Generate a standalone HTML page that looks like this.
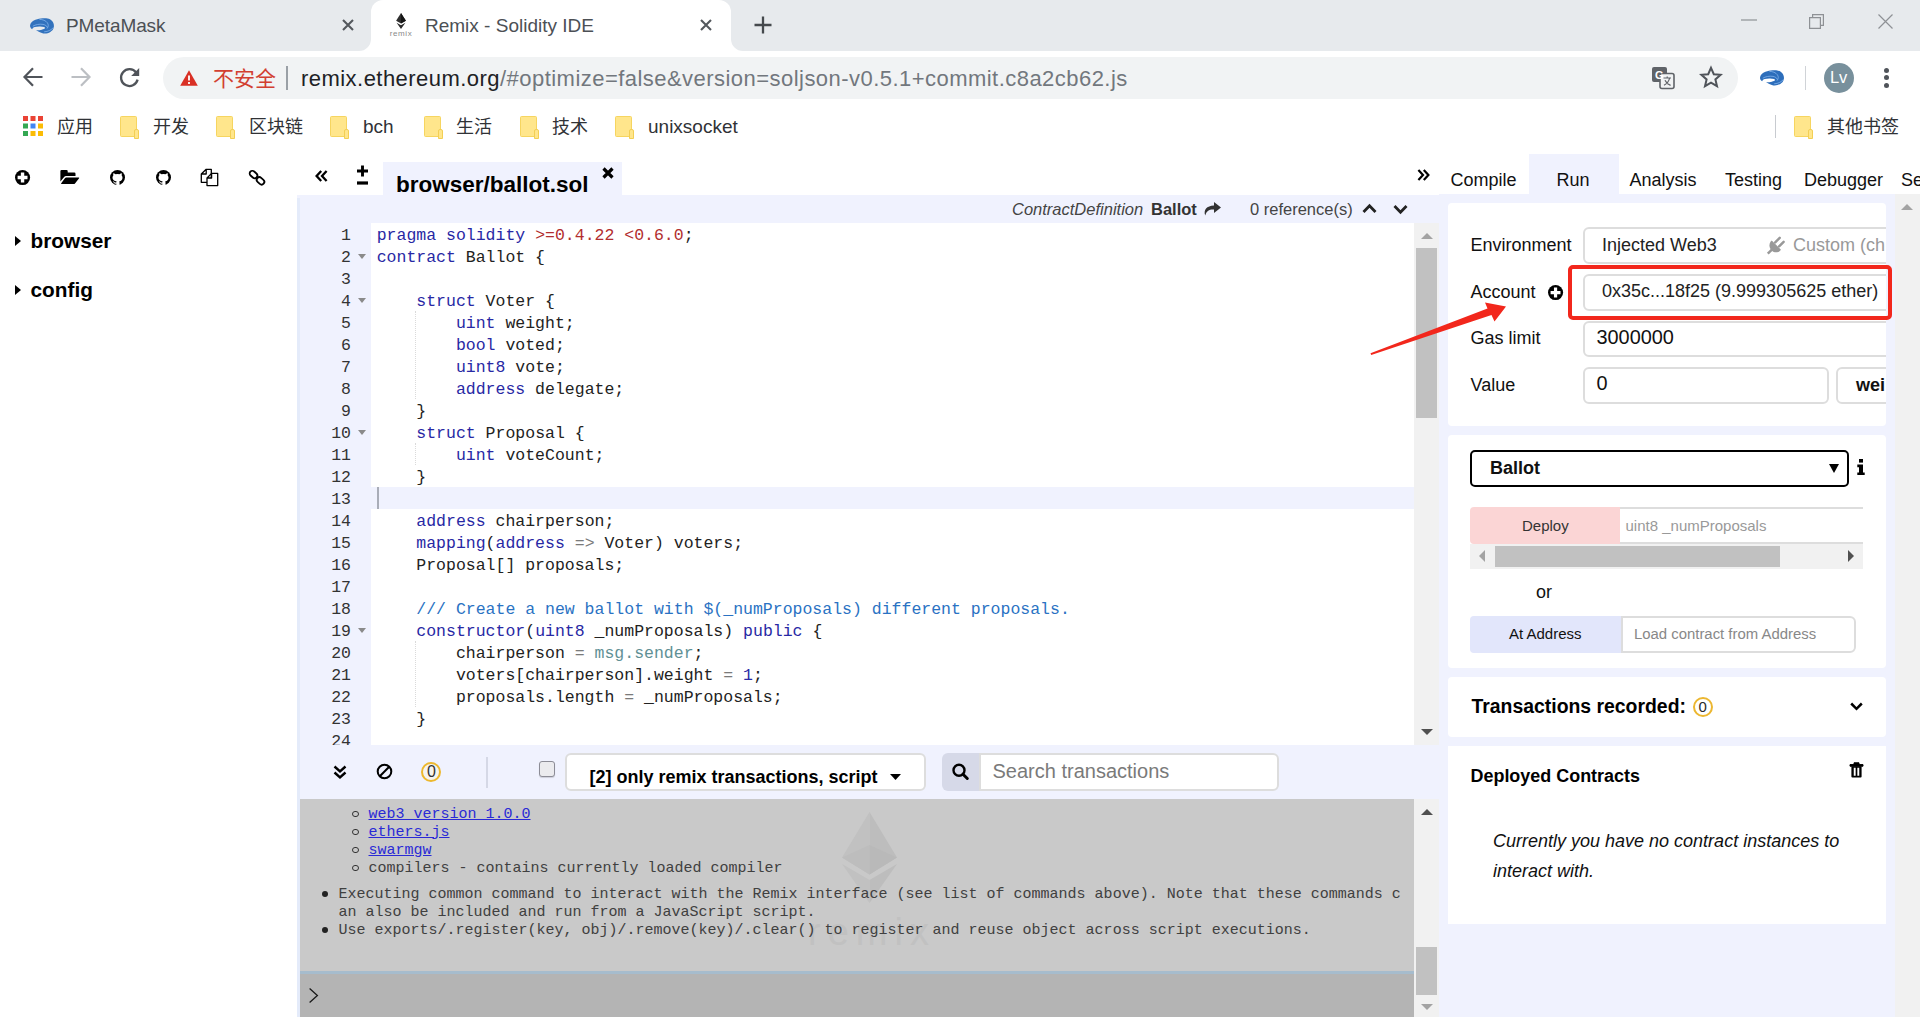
<!DOCTYPE html>
<html lang="zh">
<head>
<meta charset="utf-8">
<title>Remix - Solidity IDE</title>
<style>
*{box-sizing:border-box}
html,body{margin:0;padding:0}
body{width:1920px;height:1017px;overflow:hidden;position:relative;background:#fff;font-family:"Liberation Sans","Noto Sans CJK SC",sans-serif;color:#000}
.abs{position:absolute}
.t{position:absolute;white-space:nowrap;line-height:1}
svg{position:absolute;overflow:visible}
/* ---------- chrome ---------- */
#tabstrip{left:0;top:0;width:1920px;height:51px;background:#e7eaed}
#acttab{left:371px;top:0;width:360px;height:51px;background:#fff;border-radius:12px 12px 0 0}
.ui{font-family:"Liberation Sans","Noto Sans CJK SC",sans-serif;color:#4c5055}
#urlpill{left:163px;top:57px;width:1575px;height:41.500px;border-radius:21px;background:#f1f3f4}
.bk{font-size:18px;color:#303236;top:118px}
.fold{width:17px;height:21.500px;top:115.500px;background:#ffe68c;border:1px solid #f6d560;border-radius:1.500px}
.fold:after{content:"";position:absolute;left:12.500px;top:12.500px;width:3.500px;height:8px;background:#ffe68c;border:1px solid #f3cf55;border-radius:2px 2px 0 0}
/* ---------- page ---------- */
#page{left:0;top:0;width:1920px;height:1017px}
#editor{left:300px;top:223px;width:1114px;height:522px;overflow:hidden;background:#fff}
#gutter{left:0;top:0;width:71px;height:523px;background:#f0f2fe}
.ln{position:absolute;margin-top:2px;left:0;width:51px;text-align:right;height:22px;line-height:22px;font-family:"Liberation Mono",monospace;font-size:16.500px;color:#333}
.fa{left:58px;width:0;height:0;border-left:4px solid transparent;border-right:4px solid transparent;border-top:5px solid #8a8a8a}
#code{left:71px;top:0;width:1043px;height:523px}
.cl{position:absolute;margin-top:2px;left:5.700px;height:22px;line-height:22px;white-space:pre;font-family:"Liberation Mono",monospace;font-size:16.500px;color:#222}
.k{color:#2828a4}.s{color:#b22e2e}.c{color:#2a72c3}.o{color:#7a7a7a}.m{color:#5f9095}.n{color:#2a2aa5}
#curline{left:0;top:264px;width:1043px;height:22px;background:#f0f2fe}
#cursor{left:6px;top:264px;width:2px;height:22px;background:#a9adb8}
.rt{top:171px;font-size:18px;color:#111}
.card{left:1448px;width:438px;background:#fff;overflow:hidden}
.lb{font-size:18px;color:#111}
.inp{border:2px solid #dddddd;border-radius:6px;background:#fff}
#term{left:300px;top:799px;width:1114px;height:172px;background:#c9c9c9;overflow:hidden}
.tl{font-family:"Liberation Mono",monospace;font-size:15px;color:#404040;line-height:18px;margin-top:1.500px}
.lk{color:#2a2ad6;text-decoration:underline}
.bu0{left:52px;margin-top:1.500px;width:6.500px;height:6.500px;border-radius:4px;border:1.500px solid #333}
.bu1{left:22px;margin-top:1px;width:5.500px;height:5.500px;border-radius:3px;background:#222}
.ig{width:0;border-left:1px dotted #dadada}
</style>
</head>
<body>
<!-- CHROME -->
<div class="abs" id="tabstrip"></div>
<div class="abs" id="acttab"></div>
<!-- tab curves -->
<svg style="left:359px;top:39px" width="12" height="12"><path d="M12 0 V12 H0 A12 12 0 0 0 12 0Z" fill="#fff"/></svg>
<svg style="left:731px;top:39px" width="12" height="12"><path d="M0 0 V12 H12 A12 12 0 0 1 0 0Z" fill="#fff"/></svg>
<!-- tab 1 -->
<svg style="left:30px;top:17.500px" width="24" height="15.500" viewBox="0 0 24 15.500"><path d="M2.100 11.200 C0.300 10 -0.300 8.400 0.200 6.800 C0.800 4.800 2.200 3.400 3.800 2.600 C6 1.400 8.400 0.800 10.700 0.500 C12.600 0.200 14.400 0.100 16.200 0.200 C18 0.400 19.800 1 21 1.900 C22.600 3 23.500 4.600 23.800 6.400 C24 7.600 24 8.800 23.700 9.800 C23.200 11.600 22 13 20.300 13.900 C18.600 14.900 16.800 15.500 14.800 15.500 C12.800 15.400 10.900 14.700 9.300 13.900 C8 13.300 6.900 12.700 5.900 12 C7.500 12.300 9.100 12.300 10.700 11.900 C12.300 11.600 13.800 11.200 14.800 10.500 C15.200 10 14.900 9.400 14.100 9.100 C12.600 8.500 10.900 8.300 9.300 8.400 C7.700 8.500 6.100 8.700 4.800 9.100 C3.600 9.500 2.600 10.200 2.100 11.200Z" fill="#3272bd"/><path d="M2.800 8.200 C5.400 6.600 9.600 5.800 13 6.400 C15.400 6.900 16.900 8 17.300 9.400 M9.400 1.400 C12.600 1.300 15.800 2.600 17.400 4.800 C18.600 6.500 18.600 8.600 17 10.600 M23.400 9.400 C21.600 12 18 13.600 14.200 13.800" stroke="#8cbcf2" stroke-width="0.700" fill="none"/></svg>
<div class="t ui" style="left:66px;top:16px;font-size:19px;letter-spacing:-0.1px">PMetaMask</div>
<svg style="left:342px;top:19px" width="12" height="12" viewBox="0 0 12 12"><path d="M1 1 L11 11 M11 1 L1 11" stroke="#54585d" stroke-width="2.100" fill="none"/></svg>
<!-- tab 2 -->
<svg style="left:390px;top:12px" width="22" height="26" viewBox="0 0 22 26"><path d="M11 1 L6.100 8.800 L11 11.400 L15.900 8.800Z" fill="#2e2e2e"/><path d="M11 1 L11 11.400 L15.900 8.800Z" fill="#151515"/><path d="M6.600 10.800 L11 16.900 L15.400 10.800 L11 13.200Z" fill="#2a2a2a"/></svg>
<div class="t" style="left:389.800px;top:29.500px;font-size:8px;color:#8a8a8a;letter-spacing:0.600px">remix</div>
<div class="t ui" style="left:425px;top:16px;font-size:19px;letter-spacing:0px">Remix - Solidity IDE</div>
<svg style="left:700px;top:19px" width="12" height="12" viewBox="0 0 12 12"><path d="M1 1 L11 11 M11 1 L1 11" stroke="#54585d" stroke-width="2.100" fill="none"/></svg>
<svg style="left:754px;top:16px" width="18" height="18" viewBox="0 0 18 18"><path d="M9 0.5 V17.5 M0.5 9 H17.5" stroke="#45494d" stroke-width="2.3" fill="none"/></svg>
<!-- window controls -->
<svg style="left:1741px;top:19px" width="16" height="2"><path d="M0 1 H16" stroke="#8e9195" stroke-width="1.2"/></svg>
<svg style="left:1809px;top:14px" width="15" height="15" viewBox="0 0 15 15"><path d="M0.6 3.6 H11.4 V14.4 H0.6Z M3.6 3.6 V0.6 H14.4 V11.4 H11.4" stroke="#8e9195" stroke-width="1.2" fill="none"/></svg>
<svg style="left:1878px;top:14px" width="15" height="15" viewBox="0 0 15 15"><path d="M0.5 0.5 L14.5 14.5 M14.5 0.5 L0.5 14.5" stroke="#8e9195" stroke-width="1.2" fill="none"/></svg>
<!-- toolbar -->
<svg style="left:23px;top:67px" width="20" height="20" viewBox="0 0 20 20"><path d="M19.5 10 H2 M10 1.2 L1.5 10 L10 18.8" stroke="#50545a" stroke-width="2.2" fill="none"/></svg>
<svg style="left:71px;top:67px" width="20" height="20" viewBox="0 0 20 20"><path d="M0.5 10 H18 M10 1.2 L18.5 10 L10 18.8" stroke="#bcbfc3" stroke-width="2.2" fill="none"/></svg>
<svg style="left:119px;top:67px" width="21" height="21" viewBox="0 0 21 21"><path d="M17.2 5.6 A8.4 8.4 0 1 0 18.6 12.6" stroke="#50545a" stroke-width="2.3" fill="none"/><path d="M20.2 1 V9 H12.2Z" fill="#50545a"/></svg>
<div class="abs" id="urlpill"></div>
<svg style="left:180px;top:70px" width="18" height="16" viewBox="0 0 18 16"><path d="M9 0.3 L17.8 15.7 H0.2Z" fill="#d93025"/><path d="M9 5.4 V10.6 M9 12 V14" stroke="#fff" stroke-width="1.8"/></svg>
<div class="t" style="left:213px;top:67px;font-size:21px;color:#d23f31;font-family:'Noto Sans CJK SC',sans-serif">不安全</div>
<div class="abs" style="left:286px;top:66px;width:2px;height:24px;background:#9aa0a6"></div>
<div class="t" style="left:301px;top:68px;font-size:22px;color:#202124;letter-spacing:0.46px">remix.ethereum.org<span style="color:#72777d">/#optimize=false&amp;version=soljson-v0.5.1+commit.c8a2cb62.js</span></div>
<!-- translate icon -->
<svg style="left:1652px;top:67px" width="22" height="22" viewBox="0 0 22 22"><rect x="0" y="0" width="15" height="15" rx="2" fill="#5f6368"/><rect x="8" y="6.5" width="14" height="15" rx="2" fill="#f1f3f4" stroke="#5f6368" stroke-width="1.6"/><text x="3" y="12" font-size="11" font-weight="bold" fill="#fff" font-family="Liberation Sans, sans-serif">G</text><path d="M11.5 11 H19 M15.2 9.5 V11 M17.6 11 C17 14 14.5 17 12 18.3 M13 13.2 C14 15.5 16.4 17.6 18.6 18.4" stroke="#5f6368" stroke-width="1.2" fill="none"/></svg>
<svg style="left:1700px;top:66px" width="22" height="22" viewBox="0 0 22 22"><path d="M11 1.8 L13.8 8.2 L20.6 8.8 L15.4 13.4 L17 20.2 L11 16.6 L5 20.2 L6.6 13.4 L1.4 8.8 L8.2 8.2Z" stroke="#50545a" stroke-width="2" fill="none" stroke-linejoin="miter"/></svg>
<svg style="left:1760px;top:70.200px" width="24" height="15.500" viewBox="0 0 24 15.500"><path d="M2.100 11.200 C0.300 10 -0.300 8.400 0.200 6.800 C0.800 4.800 2.200 3.400 3.800 2.600 C6 1.400 8.400 0.800 10.700 0.500 C12.600 0.200 14.400 0.100 16.200 0.200 C18 0.400 19.800 1 21 1.900 C22.600 3 23.500 4.600 23.800 6.400 C24 7.600 24 8.800 23.700 9.800 C23.200 11.600 22 13 20.300 13.900 C18.600 14.900 16.800 15.500 14.800 15.500 C12.800 15.400 10.900 14.700 9.300 13.900 C8 13.300 6.900 12.700 5.900 12 C7.500 12.300 9.100 12.300 10.700 11.900 C12.300 11.600 13.800 11.200 14.800 10.500 C15.200 10 14.900 9.400 14.100 9.100 C12.600 8.500 10.900 8.300 9.300 8.400 C7.700 8.500 6.100 8.700 4.800 9.100 C3.600 9.500 2.600 10.200 2.100 11.200Z" fill="#2d6ebb"/><path d="M2.800 8.200 C5.400 6.600 9.600 5.800 13 6.400 C15.400 6.900 16.900 8 17.300 9.400 M9.400 1.400 C12.600 1.300 15.800 2.600 17.400 4.800 C18.600 6.500 18.600 8.600 17 10.600 M23.400 9.400 C21.600 12 18 13.600 14.200 13.800" stroke="#8cbcf2" stroke-width="0.700" fill="none"/></svg>
<div class="abs" style="left:1805px;top:66px;width:1px;height:24px;background:#d0d3d7"></div>
<div class="abs" style="left:1824px;top:63px;width:30px;height:30px;border-radius:15px;background:#78909c"></div>
<div class="t" style="left:1830px;top:69px;font-size:16.500px;color:#fff;letter-spacing:-0.200px">Lv</div>
<div class="abs" style="left:1884.400px;top:67.800px;width:5px;height:5px;border-radius:3px;background:#50545a"></div>
<div class="abs" style="left:1884.400px;top:75.300px;width:5px;height:5px;border-radius:3px;background:#50545a"></div>
<div class="abs" style="left:1884.400px;top:82.700px;width:5px;height:5px;border-radius:3px;background:#50545a"></div>
<!-- bookmarks -->
<svg style="left:23px;top:116px" width="20" height="20" viewBox="0 0 20 20"><g><rect x="0" y="0" width="5" height="5" fill="#ea4335"/><rect x="7.500" y="0" width="5" height="5" fill="#ea4335"/><rect x="15" y="0" width="5" height="5" fill="#ea4335"/><rect x="0" y="7.500" width="5" height="5" fill="#34a853"/><rect x="7.500" y="7.500" width="5" height="5" fill="#4285f4"/><rect x="15" y="7.500" width="5" height="5" fill="#fbbc05"/><rect x="0" y="15" width="5" height="5" fill="#34a853"/><rect x="7.500" y="15" width="5" height="5" fill="#fbbc05"/><rect x="15" y="15" width="5" height="5" fill="#fbbc05"/></g></svg>
<div class="t bk" style="left:57px">应用</div>
<div class="abs fold" style="left:120px"></div><div class="t bk" style="left:153px">开发</div>
<div class="abs fold" style="left:216px"></div><div class="t bk" style="left:249px">区块链</div>
<div class="abs fold" style="left:330px"></div><div class="t bk" style="left:363px;font-size:19px;top:117px">bch</div>
<div class="abs fold" style="left:424px"></div><div class="t bk" style="left:456px">生活</div>
<div class="abs fold" style="left:520px"></div><div class="t bk" style="left:552px">技术</div>
<div class="abs fold" style="left:615px"></div><div class="t bk" style="left:648px;font-size:19px;top:117px">unixsocket</div>
<div class="abs" style="left:1775px;top:115px;width:1px;height:23px;background:#c8cbd0"></div>
<div class="abs fold" style="left:1794px"></div><div class="t bk" style="left:1827px">其他书签</div>

<!-- PAGE -->
<div class="abs" id="page">
<!-- LEFT PANEL -->
<svg style="left:15.100px;top:169.900px" width="15.100" height="15.100" viewBox="0 0 15.100 15.100"><circle cx="7.550" cy="7.550" r="7.550" fill="#000"/><path d="M7.550 2.600 V12.500 M2.600 7.550 H12.500" stroke="#fff" stroke-width="3.400"/></svg>
<svg style="left:60px;top:169px" width="20" height="16" viewBox="0 0 20 16"><path d="M0.400 12.400 V2.100 Q0.400 0.900 1.600 0.900 H6.500 Q7.700 0.900 7.700 2.100 V3.500 H14.300 Q15.500 3.500 15.500 4.700 V6.900 H6 Q5 6.900 4.300 7.700Z" fill="#000"/><path d="M6.300 8.400 H18.700 Q19.600 8.400 19.100 9.200 L15 14.400 Q14.500 15 13.700 15 H1.500 Q0.700 15 1.200 14.300 L5.100 9.100 Q5.600 8.400 6.300 8.400Z" fill="#000"/></svg>
<svg class="gh" style="left:110.100px;top:169.800px" width="15" height="15.200" viewBox="0 0 15 15.200"><circle cx="7.500" cy="7.500" r="7.500" fill="#000"/><path d="M3.500 3 L5.500 4.200 Q7.500 3.700 9.500 4.200 L11.500 3 Q12 4.400 11.700 5.400 Q12.700 6.600 12.500 8 Q12.200 10.900 9.300 11.300 Q9.500 11.800 9.500 12.500 V15.200 H6.300 V13.600 Q4.200 14 3.500 12.200 Q3.200 11.500 2.600 11.300 Q3.600 10.900 4.300 11.900 Q5 12.800 6.300 12.400 Q6.300 11.700 6.600 11.300 Q2.800 10.900 2.500 8 Q2.300 6.600 3.300 5.400 Q3 4.400 3.500 3Z" fill="#fff"/></svg>
<svg class="gh" style="left:155.900px;top:169.800px" width="15" height="15.200" viewBox="0 0 15 15.200"><circle cx="7.500" cy="7.500" r="7.500" fill="#000"/><path d="M3.500 3 L5.500 4.200 Q7.500 3.700 9.500 4.200 L11.500 3 Q12 4.400 11.700 5.400 Q12.700 6.600 12.500 8 Q12.200 10.900 9.300 11.300 Q9.500 11.800 9.500 12.500 V15.200 H6.300 V13.600 Q4.200 14 3.500 12.200 Q3.200 11.500 2.600 11.300 Q3.600 10.900 4.300 11.900 Q5 12.800 6.300 12.400 Q6.300 11.700 6.600 11.300 Q2.800 10.900 2.500 8 Q2.300 6.600 3.300 5.400 Q3 4.400 3.500 3Z" fill="#fff"/></svg>
<svg style="left:200px;top:168px" width="19" height="19" viewBox="0 0 19 19"><path d="M1.300 6 L6.200 1.300 H11.300 V14.300 H1.300Z M1.300 6 H6.200 V1.300" fill="#fff" stroke="#000" stroke-width="1.300" stroke-linejoin="round"/><path d="M7 10 L11.600 5.400 H17.700 V17.600 H7Z M7 10 H11.600 V5.400" fill="#fff" stroke="#000" stroke-width="1.300" stroke-linejoin="round"/></svg>
<svg style="left:248.500px;top:168.500px" width="17" height="17" viewBox="0 0 17 17"><g fill="none" stroke="#000" stroke-width="1.800"><rect x="0.300" y="2.800" width="8.400" height="5.400" rx="2.700" transform="rotate(42 4.500 5.500)"/><rect x="7.300" y="9.200" width="8.400" height="5.400" rx="2.700" transform="rotate(42 11.500 11.900)"/></g></svg>
<svg style="left:15px;top:235.500px" width="6" height="10" viewBox="0 0 6 10"><path d="M0 0 L6 5 L0 10Z" fill="#000"/></svg>
<div class="t" style="left:30.500px;top:231px;font-size:20.800px;font-weight:bold">browser</div>
<svg style="left:15px;top:284.500px" width="6" height="10" viewBox="0 0 6 10"><path d="M0 0 L6 5 L0 10Z" fill="#000"/></svg>
<div class="t" style="left:30.500px;top:280px;font-size:20.800px;font-weight:bold">config</div>

<!-- CENTER -->
<div class="abs" style="left:297px;top:195px;width:1143px;height:822px;background:#f0f2fe"></div>
<div class="abs" style="left:297px;top:198px;width:3px;height:819px;background:#e4ebfa"></div>
<div class="abs" style="left:383px;top:162px;width:239px;height:34px;background:#f0f2fe"></div>
<svg style="left:315px;top:170px" width="13" height="12" viewBox="0 0 13 12"><path d="M6.200 1 L1.600 6 L6.200 11 M11.600 1 L7 6 L11.600 11" stroke="#000" stroke-width="2.300" fill="none"/></svg>
<svg style="left:356px;top:165px" width="13" height="21" viewBox="0 0 13 21"><path d="M6.500 0.500 V11.500 M1 6 H12" stroke="#000" stroke-width="2.900" fill="none"/><path d="M1 18 H12" stroke="#000" stroke-width="3.200"/></svg>
<div class="t" style="left:396px;top:173.500px;font-size:22.500px;font-weight:bold">browser/ballot.sol</div>
<svg style="left:602px;top:167px" width="12" height="12" viewBox="0 0 12 12"><path d="M1.500 1.500 L10.500 10.500 M10.500 1.500 L1.500 10.500" stroke="#000" stroke-width="3.200"/></svg>
<svg style="left:1416.800px;top:168.800px" width="13" height="12" viewBox="0 0 13 12"><path d="M1.400 1 L6 6 L1.400 11 M6.800 1 L11.400 6 L6.800 11" stroke="#000" stroke-width="2.200" fill="none"/></svg>
<!-- context bar -->
<div class="t" style="left:1012px;top:201px;font-size:16.500px;font-style:italic;color:#444">ContractDefinition</div>
<div class="t" style="left:1151px;top:201px;font-size:16.500px;font-weight:bold;color:#333">Ballot</div>
<svg style="left:1204px;top:202px" width="17" height="14" viewBox="0 0 17 14"><path d="M10 0 L17 5.500 L10 11 V7.600 C5 7.400 2.400 9 1.300 13.600 C-0.800 8 2.600 3.600 10 3.400Z" fill="#333"/></svg>
<div class="t" style="left:1250px;top:201px;font-size:16.500px;color:#444">0 reference(s)</div>
<svg style="left:1362px;top:203px" width="15" height="11" viewBox="0 0 15 11"><path d="M1.500 9 L7.500 2.800 L13.500 9" stroke="#222" stroke-width="2.800" fill="none"/></svg>
<svg style="left:1393px;top:204px" width="15" height="11" viewBox="0 0 15 11"><path d="M1.500 2 L7.500 8.200 L13.500 2" stroke="#222" stroke-width="2.800" fill="none"/></svg>
<!-- editor -->
<div class="abs" id="editor">
<div class="abs" id="gutter">
<div class="ln" style="top:0px">1</div>
<div class="ln" style="top:22px">2</div>
<div class="abs fa" style="top:31px"></div>
<div class="ln" style="top:44px">3</div>
<div class="ln" style="top:66px">4</div>
<div class="abs fa" style="top:75px"></div>
<div class="ln" style="top:88px">5</div>
<div class="ln" style="top:110px">6</div>
<div class="ln" style="top:132px">7</div>
<div class="ln" style="top:154px">8</div>
<div class="ln" style="top:176px">9</div>
<div class="ln" style="top:198px">10</div>
<div class="abs fa" style="top:207px"></div>
<div class="ln" style="top:220px">11</div>
<div class="ln" style="top:242px">12</div>
<div class="ln" style="top:264px">13</div>
<div class="ln" style="top:286px">14</div>
<div class="ln" style="top:308px">15</div>
<div class="ln" style="top:330px">16</div>
<div class="ln" style="top:352px">17</div>
<div class="ln" style="top:374px">18</div>
<div class="ln" style="top:396px">19</div>
<div class="abs fa" style="top:405px"></div>
<div class="ln" style="top:418px">20</div>
<div class="ln" style="top:440px">21</div>
<div class="ln" style="top:462px">22</div>
<div class="ln" style="top:484px">23</div>
<div class="ln" style="top:506px">24</div>
</div>
<div class="abs" id="code">
<div class="abs" id="curline"></div><div class="abs" id="cursor"></div>
<div class="abs ig" style="left:43.500px;top:88px;height:88px"></div>
<div class="abs ig" style="left:43.500px;top:220px;height:22px"></div>
<div class="abs ig" style="left:43.500px;top:418px;height:66px"></div>
<div class="cl" style="top:0px"><span class="k">pragma solidity</span> <span class="s">&gt;=0.4.22 &lt;0.6.0</span>;</div>
<div class="cl" style="top:22px"><span class="k">contract</span> Ballot {</div>
<div class="cl" style="top:44px"></div>
<div class="cl" style="top:66px">    <span class="k">struct</span> Voter {</div>
<div class="cl" style="top:88px">        <span class="k">uint</span> weight;</div>
<div class="cl" style="top:110px">        <span class="k">bool</span> voted;</div>
<div class="cl" style="top:132px">        <span class="k">uint8</span> vote;</div>
<div class="cl" style="top:154px">        <span class="k">address</span> delegate;</div>
<div class="cl" style="top:176px">    }</div>
<div class="cl" style="top:198px">    <span class="k">struct</span> Proposal {</div>
<div class="cl" style="top:220px">        <span class="k">uint</span> voteCount;</div>
<div class="cl" style="top:242px">    }</div>
<div class="cl" style="top:264px"></div>
<div class="cl" style="top:286px">    <span class="k">address</span> chairperson;</div>
<div class="cl" style="top:308px">    <span class="k">mapping</span>(<span class="k">address</span> <span class="o">=&gt;</span> Voter) voters;</div>
<div class="cl" style="top:330px">    Proposal[] proposals;</div>
<div class="cl" style="top:352px"></div>
<div class="cl" style="top:374px">    <span class="c">/// Create a new ballot with $(_numProposals) different proposals.</span></div>
<div class="cl" style="top:396px">    <span class="k">constructor</span>(<span class="k">uint8</span> _numProposals) <span class="k">public</span> {</div>
<div class="cl" style="top:418px">        chairperson <span class="o">=</span> <span class="m">msg.sender</span>;</div>
<div class="cl" style="top:440px">        voters[chairperson].weight <span class="o">=</span> <span class="n">1</span>;</div>
<div class="cl" style="top:462px">        proposals.length <span class="o">=</span> _numProposals;</div>
<div class="cl" style="top:484px">    }</div>
<div class="cl" style="top:506px"></div>
</div>
</div>
<!-- editor scrollbar -->
<div class="abs" style="left:1414px;top:223px;width:25px;height:522px;background:#f1f1f1"></div>
<div class="abs" style="left:1416px;top:248px;width:21px;height:170px;background:#c1c1c1"></div>
<svg style="left:1420.500px;top:233px" width="12" height="6"><path d="M0 6 L6 0 L12 6Z" fill="#a3a3a3"/></svg>
<svg style="left:1420.500px;top:729px" width="12" height="6"><path d="M0 0 L6 6 L12 0Z" fill="#505050"/></svg>

<!-- TERMINAL BAR -->
<svg style="left:333px;top:764.500px" width="14" height="14" viewBox="0 0 14 14"><path d="M1.500 1.500 L7 6.500 L12.500 1.500 M1.500 7.500 L7 12.500 L12.500 7.500" stroke="#000" stroke-width="2.400" fill="none"/></svg>
<svg style="left:375.500px;top:762.800px" width="17" height="17" viewBox="0 0 17 17"><circle cx="8.500" cy="8.500" r="6.800" stroke="#000" stroke-width="2" fill="none"/><path d="M3.800 13.200 L13.200 3.800" stroke="#000" stroke-width="2"/></svg>
<div class="abs" style="left:421px;top:761.500px;width:20px;height:20px;border-radius:10px;border:2px solid #edb82e;background:#f6f4f0"></div>
<div class="t" style="left:427.100px;top:763.500px;font-size:16px;color:#333">0</div>
<div class="abs" style="left:486px;top:757px;width:1.500px;height:31px;background:#d5d8e6"></div>
<div class="abs" style="left:539px;top:761px;width:16px;height:16px;border:1px solid #8c8c96;border-radius:3px;background:#ebebee;box-shadow:0 1px 1px rgba(0,0,0,0.150)"></div>
<div class="abs inp" style="left:564.800px;top:753px;width:361.700px;height:37.500px"></div>
<div class="t" style="left:589.500px;top:767.700px;font-size:18px;font-weight:bold;color:#000">[2] only remix transactions, script</div>
<svg style="left:890px;top:774px" width="11" height="6"><path d="M0 0 H11 L5.500 6Z" fill="#000"/></svg>
<div class="abs" style="left:941.500px;top:753px;width:40px;height:37.500px;background:#d6d9e8;border-radius:6px 0 0 6px"></div>
<svg style="left:952px;top:763px" width="18" height="18" viewBox="0 0 18 18"><circle cx="7" cy="7.200" r="5.500" stroke="#000" stroke-width="2.400" fill="none"/><path d="M11 11.200 L15.300 15.500" stroke="#000" stroke-width="3" stroke-linecap="round"/></svg>
<div class="abs inp" style="left:979px;top:753px;width:300px;height:37.500px;border-radius:0 6px 6px 0"></div>
<div class="t" style="left:992.500px;top:761.300px;font-size:20px;color:#7a7a7a">Search transactions</div>
<!-- TERMINAL LOG -->
<div class="abs" id="term">
 <svg style="left:542px;top:13px" width="55" height="91" viewBox="0 0 55 91"><path d="M27.500 0 L0 45.500 L27.500 62.500Z" fill="#c1c1c1"/><path d="M27.500 0 V62.500 L55 45.500Z" fill="#bdbdbd"/><path d="M27.500 33 L0 45.500 L27.500 62.500Z" fill="#bdbdbd"/><path d="M27.500 33 V62.500 L55 45.500Z" fill="#b9b9b9"/><path d="M0 52 L27.500 91 V68Z" fill="#c1c1c1"/><path d="M55 52 L27.500 91 V68Z" fill="#bdbdbd"/></svg>
 <div class="t" style="left:508px;top:114px;font-size:38px;color:#c1c1c1;letter-spacing:7px;font-weight:normal">remix</div>
 <div class="abs bu0" style="top:10px"></div><div class="t tl" style="left:68.500px;top:5px"><span class="lk">web3 version 1.0.0</span></div>
 <div class="abs bu0" style="top:28px"></div><div class="t tl" style="left:68.500px;top:23px"><span class="lk">ethers.js</span></div>
 <div class="abs bu0" style="top:46px"></div><div class="t tl" style="left:68.500px;top:41px"><span class="lk">swarmgw</span></div>
 <div class="abs bu0" style="top:64px"></div><div class="t tl" style="left:68.500px;top:59px">compilers - contains currently loaded compiler</div>
 <div class="abs bu1" style="top:91px"></div><div class="t tl" style="left:38.500px;top:85px">Executing common command to interact with the Remix interface (see list of commands above). Note that these commands c</div>
 <div class="t tl" style="left:38.500px;top:103px">an also be included and run from a JavaScript script.</div>
 <div class="abs bu1" style="top:127px"></div><div class="t tl" style="left:38.500px;top:121px">Use exports/.register(key, obj)/.remove(key)/.clear() to register and reuse object across script executions.</div>
</div>
<div class="abs" style="left:300px;top:970.500px;width:1114px;height:3.500px;background:#a6bccd"></div>
<div class="abs" style="left:300px;top:974px;width:1114px;height:43px;background:#b4b4b4"></div>
<svg style="left:308.500px;top:988px" width="9" height="15" viewBox="0 0 9 15"><path d="M0.600 0.500 L8.400 7.500 L0.600 14.500" stroke="#1a1a1a" stroke-width="1.300" fill="none"/></svg>
<!-- terminal scrollbar -->
<div class="abs" style="left:1414px;top:799px;width:25px;height:218px;background:#f1f1f1"></div>
<div class="abs" style="left:1416px;top:947px;width:21px;height:48px;background:#c1c1c1"></div>
<svg style="left:1420.500px;top:809px" width="12" height="6"><path d="M0 6 L6 0 L12 6Z" fill="#505050"/></svg>
<svg style="left:1420.500px;top:1004px" width="12" height="6"><path d="M0 0 L6 6 L12 0Z" fill="#a3a3a3"/></svg>

<!-- RIGHT PANEL -->
<div class="abs" style="left:1439px;top:194px;width:481px;height:823px;background:#f0f2fe"></div>
<div class="abs" style="left:1529px;top:154px;width:90px;height:42px;background:#f0f2fe"></div>
<div class="t rt" style="left:1450.500px">Compile</div>
<div class="t rt" style="left:1556.500px">Run</div>
<div class="t rt" style="left:1629.500px">Analysis</div>
<div class="t rt" style="left:1725px">Testing</div>
<div class="t rt" style="left:1804px">Debugger</div>
<div class="t rt" style="left:1901px">Se</div>
<!-- scrollbar -->
<div class="abs" style="left:1895px;top:194px;width:25px;height:823px;background:#f1f1f1"></div>
<svg style="left:1901px;top:204px" width="12" height="6"><path d="M0 6 L6 0 L12 6Z" fill="#a3a3a3"/></svg>
<!-- card 1 -->
<div class="abs card" style="top:203px;height:223px;border-radius:4px">
 <div class="t lb" style="left:22.500px;top:33px">Environment</div>
 <div class="abs inp" style="left:135px;top:24px;width:320px;height:37px"></div>
 <div class="t lb" style="left:154px;top:33px;color:#222">Injected Web3</div>
 <svg style="left:319px;top:31.500px" width="19.500" height="19.500" viewBox="0 0 19 19"><path d="M0.800 18.200 L5.500 13.500" stroke="#999" stroke-width="2.400"/><path d="M4.600 5.400 L13.600 14.400 C11.600 17.400 7.200 17.800 4.400 15 C1.600 12.200 1.800 7.600 4.600 5.400Z" fill="#999"/><path d="M8 7.200 L12.400 2.800 M11.800 11 L16.200 6.600" stroke="#999" stroke-width="2.400" stroke-linecap="round"/></svg>
 <div class="t lb" style="left:345px;top:33px;color:#999">Custom (ch</div>
 <div class="t lb" style="left:22.500px;top:80px">Account</div>
 <svg style="left:100px;top:81.500px" width="15.100" height="15.100" viewBox="0 0 15.100 15.100"><circle cx="7.550" cy="7.550" r="7.550" fill="#000"/><path d="M7.550 2.600 V12.500 M2.600 7.550 H12.500" stroke="#fff" stroke-width="3.200"/></svg>
 <div class="abs inp" style="left:135px;top:71px;width:320px;height:37px"></div>
 <div class="t lb" style="left:154px;top:79px;color:#222">0x35c...18f25 (9.999305625 ether)</div>
 <div class="t lb" style="left:22.500px;top:126px">Gas limit</div>
 <div class="abs inp" style="left:135px;top:118px;width:320px;height:36px"></div>
 <div class="t" style="left:148.500px;top:125px;font-size:19.900px;color:#111">3000000</div>
 <div class="t lb" style="left:22.500px;top:173px">Value</div>
 <div class="abs inp" style="left:135px;top:163.500px;width:246px;height:37px"></div>
 <div class="t" style="left:148.500px;top:171px;font-size:19.900px;color:#111">0</div>
 <div class="abs inp" style="left:388px;top:163.500px;width:80px;height:37px"></div>
 <div class="t lb" style="left:408px;top:173px;font-weight:bold;color:#111">wei</div>
</div>
<!-- card 2 -->
<div class="abs card" style="top:435px;height:233px;border-radius:4px">
 <div class="abs" style="left:22px;top:15px;width:379px;height:37px;border:2px solid #000;border-radius:5px;background:#fff"></div>
 <div class="t lb" style="left:42px;top:24px;font-weight:bold;color:#111">Ballot</div>
 <svg style="left:381px;top:29px" width="10" height="9"><path d="M0 0 H10 L5 9Z" fill="#000"/></svg>
 <svg style="left:408.500px;top:23.500px" width="8" height="16" viewBox="0 0 8 16"><rect x="2" y="0" width="4" height="3.600" fill="#000"/><path d="M0.300 5.600 H6 V13.400 H7.700 V16 H0.300 V13.400 H2 V8.200 H0.300Z" fill="#000"/></svg>
 <div class="abs" style="left:22px;top:72px;width:150px;height:37px;background:#fbd5d5;border-radius:4px 0 0 4px"></div>
 <div class="t" style="left:74px;top:83px;font-size:15px;color:#333">Deploy</div>
 <div class="abs" style="left:172px;top:72px;width:243px;height:37px;border-top:2px solid #ddd;border-bottom:2px solid #ddd"></div>
 <div class="t" style="left:177.500px;top:82.800px;font-size:15px;color:#999">uint8 _numProposals</div>
 <div class="abs" style="left:22px;top:109px;width:393px;height:25px;background:#f1f1f1"></div>
 <div class="abs" style="left:47px;top:111px;width:285px;height:21px;background:#c1c1c1"></div>
 <svg style="left:31px;top:115px" width="6" height="12"><path d="M6 0 L0 6 L6 12Z" fill="#a3a3a3"/></svg>
 <svg style="left:400px;top:115px" width="6" height="12"><path d="M0 0 L6 6 L0 12Z" fill="#505050"/></svg>
 <div class="t lb" style="left:88px;top:148px;color:#111">or</div>
 <div class="abs" style="left:22px;top:181px;width:151px;height:37px;background:#e2e6fb;border-radius:4px 0 0 4px"></div>
 <div class="t" style="left:61px;top:190.500px;font-size:15px;color:#111">At Address</div>
 <div class="abs inp" style="left:173px;top:181px;width:235px;height:37px;border-radius:0 6px 6px 0"></div>
 <div class="t" style="left:186px;top:192px;font-size:14.900px;color:#888">Load contract from Address</div>
</div>
<!-- card 3 -->
<div class="abs card" style="top:677px;height:60px;border-radius:4px">
 <div class="t" style="left:23.500px;top:20px;font-size:19.400px;font-weight:bold">Transactions recorded:</div>
 <div class="abs" style="left:244.500px;top:19.500px;width:20.500px;height:20.500px;border-radius:11px;border:2px solid #ecb731;background:#fff"></div>
 <div class="t" style="left:250.600px;top:22px;font-size:15px;color:#2a2a2a">0</div>
 <svg style="left:1850px;top:701.700px;position:fixed" width="13" height="9" viewBox="0 0 13 9"><path d="M1.200 1.500 L6.500 6.800 L11.800 1.500" stroke="#000" stroke-width="2.500" fill="none"/></svg>
</div>
<!-- card 4 -->
<div class="abs card" style="top:746px;height:178px">
 <div class="t" style="left:22.500px;top:21.500px;font-size:17.950px;font-weight:bold">Deployed Contracts</div>
 <svg style="left:402px;top:16px" width="13" height="16" viewBox="0 0 13 16"><path d="M0 2.600 H13 V4.200 H0Z M4 2.600 V0.800 H9 V2.600" fill="#000" stroke="#000" stroke-width="1"/><path d="M1.400 4.200 H11.600 V14.600 Q11.600 15.600 10.600 15.600 H2.400 Q1.400 15.600 1.400 14.600Z" fill="#000"/><path d="M4.700 5.800 V13.800 M8.300 5.800 V13.800" stroke="#fff" stroke-width="1.900"/></svg>
 <div class="t" style="left:45px;top:80px;font-size:18px;font-style:italic;line-height:30px;color:#111;white-space:normal;width:380px">Currently you have no contract instances to interact with.</div>
</div>

</div>
<svg style="left:0;top:0" width="1920" height="1017" viewBox="0 0 1920 1017"><rect x="1570" y="267" width="320" height="51" rx="3" fill="none" stroke="#f2271c" stroke-width="4"/><path d="M1370.500 353.300 L1487.500 308.500 L1485 302.500 L1506 306.500 L1494.500 321.500 L1491.500 315 L1371.200 355Z" fill="#f2271c"/></svg>
</body>
</html>
